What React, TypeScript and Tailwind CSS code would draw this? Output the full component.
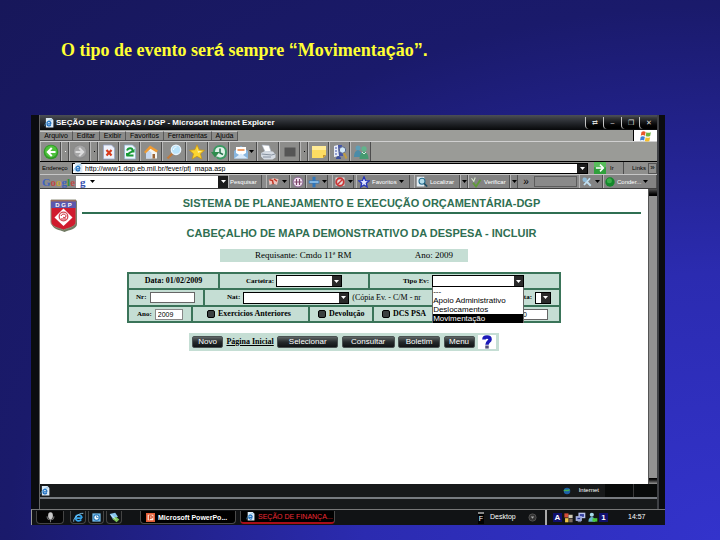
import React from "react";

type Kids = { children?: React.ReactNode };

function Svg({ children, className = "size-4" }: Kids & { className?: string }) {
  return (
    <svg viewBox="0 0 16 16" className={`shrink-0 ${className}`} aria-hidden="true">
      {children}
    </svg>
  );
}

function Caret({ className = "fill-black" }: { className?: string }) {
  return (
    <svg viewBox="0 0 5 3" className={`h-[3px] w-[5px] shrink-0 ${className}`} aria-hidden="true">
      <path d="M0 0h5L2.5 3z" />
    </svg>
  );
}

const BackIcon = () => (
  <Svg>
    <circle cx="8" cy="8" r="7.3" fill="#2f9a26" />
    <circle cx="8" cy="7.4" r="6" fill="#4fc13c" />
    <path d="M12.5 7H7.3l2.2-2.4L8 3.2 3.4 8 8 12.8l1.5-1.4L7.3 9h5.2z" fill="#fff" />
  </Svg>
);
const ForwardIcon = () => (
  <Svg>
    <circle cx="8" cy="8" r="7.2" fill="#8a8a8a" />
    <circle cx="8" cy="7.6" r="6" fill="#a5a5a5" />
    <path d="M3.5 7h5.2L6.5 4.6 8 3.2 12.6 8 8 12.8l-1.5-1.4L8.7 9H3.5z" fill="#dcdcdc" />
  </Svg>
);
const StopIcon = () => (
  <Svg>
    <path d="M2.5 1h8l3 3v11h-11z" fill="#eef2fb" stroke="#9aa8cc" strokeWidth=".8" />
    <path d="M5.5 6l5 5.500M10.500 6l-5 5.500" stroke="#d83a1c" strokeWidth="2.2" />
  </Svg>
);
const RefreshIcon = () => (
  <Svg>
    <path d="M2.5 1h8l3 3v11h-11z" fill="#eef7ff" stroke="#8fb0cc" strokeWidth=".8" />
    <path d="M5 6.500c1-3 5.500-3 5.500 0 0 2-5 2-5 5h6" fill="none" stroke="#189a35" strokeWidth="1.900" />
    <path d="M12.500 4.500v4H9zM4 12.500V9h3z" fill="#189a35" />
  </Svg>
);
const HomeIcon = () => (
  <Svg>
    <path d="M3 8l5.500-4.500L14 8v6.500H3z" fill="#f6f5f0" />
    <path d="M3 14.500V8l2.500-2 3 2.500v6z" fill="#c7d8ef" />
    <path d="M1 8L7 1.500l8 5-1.500 2-6-3.700L2.500 9.500z" fill="#ee9b34" />
    <path d="M9.500 10h2.500v4.500H9.500z" fill="#9a6234" />
  </Svg>
);
const SearchIcon = () => (
  <Svg>
    <path d="M6.500 9.500L1.500 14.500" stroke="#c07a3c" strokeWidth="2.300" />
    <circle cx="10" cy="5.800" r="4.700" fill="#b9e4fb" stroke="#eaf6ff" strokeWidth="1.300" />
    <path d="M7.500 6c0-2 1.500-3 3-3" stroke="#fff" fill="none" />
  </Svg>
);
const StarIcon = () => (
  <Svg>
    <path d="M8 .8l2.200 5 5.300.5-4 3.500 1.300 5.200L8 12.300 3.200 15l1.300-5.200-4-3.500 5.300-.5z" fill="#fbd530" stroke="#c9900f" strokeWidth=".7" />
    <path d="M8 3l1.200 4H13L9 9z" fill="#fff3a3" />
  </Svg>
);
const HistoryIcon = () => (
  <Svg>
    <path d="M3 8C3 0 15 0 15 8s-8 7-9 5" fill="#dff2e8" stroke="#3b9a63" strokeWidth="2" />
    <path d="M9 4.500V9l3 1.500" stroke="#26734d" strokeWidth="1.500" fill="none" />
    <path d="M0 8h8.500L4 13.500z" fill="#2f8b4d" />
  </Svg>
);
const MailIcon = () => (
  <Svg>
    <path d="M1 7l7-5 7 5v7.500H1z" fill="#88b6df" />
    <path d="M3 3h10v6l-5 3-5-3z" fill="#fff" />
    <path d="M4.500 5h7v2h-7z" fill="#f2a26b" />
    <path d="M1 14.500L8 9.500l7 5z" fill="#d7e9fa" />
  </Svg>
);
const PrintIcon = () => (
  <Svg>
    <path d="M2 1l7 .5 2 6H5z" fill="#fff" stroke="#a7b4c4" strokeWidth=".6" />
    <path d="M1 9l4-2 8 .5 2.500 3v3l-3 2H4l-3-3z" fill="#d5dbe3" />
    <path d="M1.500 10l10 1 3.500-1M3 13h8" stroke="#7e8997" strokeWidth=".9" fill="none" />
  </Svg>
);
const EditIcon = () => (
  <Svg>
    <path d="M2.500 3.500h11v9h-11z" fill="#555" />
  </Svg>
);
const NoteIcon = () => (
  <Svg>
    <path d="M1 2h14v9l-3 3H1z" fill="#fddc62" />
    <path d="M1 2h14v4H1z" fill="#ffeb96" />
    <path d="M15 11h-3v3z" fill="#c8952a" />
  </Svg>
);
const ResearchIcon = () => (
  <Svg>
    <path d="M2 2l4-1 1 11-5 1z" fill="#e7ecf8" />
    <path d="M6 1h4l1 11H7z" fill="#4556a8" />
    <path d="M3 4h2M3 7h2M3 10h2" stroke="#4556a8" />
    <circle cx="10.500" cy="6" r="3.200" fill="#d2e8f6" stroke="#59678c" />
    <path d="M12 9l2.500 5.500" stroke="#bf9b40" strokeWidth="2" />
    <path d="M4 15c0-4 5-4 5 0z" fill="#3c4f9c" />
  </Svg>
);
const PeopleIcon = () => (
  <Svg>
    <circle cx="5" cy="4" r="2.500" fill="#5f9fb8" />
    <path d="M1 13c0-9 8-9 8 0z" fill="#4b8ca8" />
    <circle cx="11" cy="5" r="2.700" fill="#62b58c" />
    <path d="M6.500 15c0-9.500 9-9.500 9 0z" fill="#469a70" />
    <path d="M9 8l2 2 2-2" stroke="#d7efe2" fill="none" />
  </Svg>
);
const IePageIcon = ({ className = "size-[11px]" }: { className?: string }) => (
  <Svg className={className}>
    <path d="M3 0h9l3 3v12H3z" fill="#dceaf6" />
    <path d="M11.500 9.500H4.800c0 3.500 4.500 4 6 1.500M4.800 8c.5-3.500 6-3.500 6.500 1" fill="none" stroke="#1f6fc0" strokeWidth="2" />
    <path d="M1 13C1 8 9 2 13 3" fill="none" stroke="#4fa5dd" />
  </Svg>
);
const IeIcon = () => (
  <Svg className="size-[11px]">
    <path d="M13 9H4c0 4.500 6 5 8 2M4 8c.5-5 8.500-5 9 1" fill="none" stroke="#35a2e8" strokeWidth="2.500" />
    <path d="M1 14C0 9 9 1 15 2" fill="none" stroke="#8fd0f5" strokeWidth="1.300" />
  </Svg>
);
const WindowsFlag = () => (
  <Svg className="size-3">
    <path d="M2 2.500c2-1 3.500-1 5.500 0L6.500 7.500c-2-1-3.500-1-5.500 0z" fill="#e8572a" />
    <path d="M8.500 3c2 1 4 1 6 0l-1 5c-2 1-4 1-6 0z" fill="#6db33f" />
    <path d="M1 9c2-1 3.500-1 5.500 0l-1 5c-2-1-3.500-1-5.500 0z" fill="#3f7fd4" />
    <path d="M7.500 9.500c2 1 4 1 6 0l-1 5c-2 1-4 1-6 0z" fill="#f5bd2a" />
  </Svg>
);
const GoIcon = () => (
  <Svg className="size-3">
    <path d="M0 0h16v16H0z" fill="#2fa03b" />
    <path d="M0 0h16v7H0z" fill="#58bd5c" />
    <path d="M2.500 8h9M8 3.500L12.500 8 8 12.500" stroke="#fff" strokeWidth="2" fill="none" />
  </Svg>
);

const tool = "flex h-[19px] items-center justify-center border-r border-r-[#4d4d4d] border-l border-l-[#b9b9b9] bg-[#8d8d8b]";

function Tool({ label, width, children }: Kids & { label: string; width: string }) {
  return (
    <button type="button" aria-label={label} className={`${tool} ${width}`}>
      {children}
    </button>
  );
}

function Toolbar() {
  return (
    <div className="flex h-5 items-center overflow-hidden border-t border-[#d0d0d0] bg-[#9a9b97]">
      <Tool label="Voltar" width="w-[21px]"><BackIcon /></Tool>
      <Tool label="Histórico anterior" width="w-2"><span className="size-px bg-white" /></Tool>
      <Tool label="Avançar" width="w-[21px]"><ForwardIcon /></Tool>
      <Tool label="Histórico seguinte" width="w-2"><span className="size-px bg-black" /></Tool>
      <Tool label="Parar" width="w-[21px]"><StopIcon /></Tool>
      <Tool label="Atualizar" width="w-[21px]"><RefreshIcon /></Tool>
      <Tool label="Página inicial" width="w-[22px]"><HomeIcon /></Tool>
      <Tool label="Pesquisar" width="w-6"><SearchIcon /></Tool>
      <Tool label="Favoritos" width="w-[22px]"><StarIcon /></Tool>
      <Tool label="Histórico" width="w-[21px]"><HistoryIcon /></Tool>
      <Tool label="Correio" width="w-7"><MailIcon /><Caret /></Tool>
      <Tool label="Imprimir" width="w-[22px]"><PrintIcon /></Tool>
      <Tool label="Editar" width="w-[21px]"><EditIcon /></Tool>
      <Tool label="Opções de edição" width="w-2"><span className="size-px bg-black" /></Tool>
      <Tool label="Discutir" width="w-[21px]"><NoteIcon /></Tool>
      <Tool label="Referência" width="w-[21px]"><ResearchIcon /></Tool>
      <Tool label="Messenger" width="w-[21px]"><PeopleIcon /></Tool>
    </div>
  );
}

function TitleBar() {
  return (
    <header className="flex h-[15px] items-center bg-linear-to-b from-[#4c4f56] via-[#26292e] to-[#08090b] pl-1">
      <IePageIcon className="size-[10px]" />
      <span className="ml-[2px] flex-1 overflow-hidden text-[8px] leading-3 font-bold whitespace-nowrap text-white">
        SEÇÃO DE FINANÇAS / DGP - Microsoft Internet Explorer
      </span>
      {[
        ["Fixar", "⇄"],
        ["Minimizar", "–"],
        ["Restaurar", "❐"],
        ["Fechar", "✕"],
      ].map(([name, glyph]) => (
        <button
          key={name}
          type="button"
          aria-label={name}
          className="flex h-3 w-[18px] items-center justify-center rounded-bl border-l border-l-[#c4c4c4] bg-linear-to-b from-[#3d3f42] to-black text-[7px] leading-none text-[#dcdcdc]"
        >
          {glyph}
        </button>
      ))}
    </header>
  );
}

function MenuBar() {
  const item = "h-[10px] border-r border-b border-[#575757] border-t border-t-[#c8c8c8] bg-[#8b8b89] text-center text-[7px] leading-[8px] text-black";
  return (
    <nav className="flex h-[11px] items-center bg-[#9c9d99]">
      <button type="button" className={`${item} w-[33px]`}>Arquivo</button>
      <button type="button" className={`${item} w-[27px]`}>Editar</button>
      <button type="button" className={`${item} w-[26px]`}>Exibir</button>
      <button type="button" className={`${item} w-[38px]`}>Favoritos</button>
      <button type="button" className={`${item} w-12`}>Ferramentas</button>
      <button type="button" className={`${item} w-[26px]`}>Ajuda</button>
      <span className="ml-auto flex h-[11px] w-6 items-center justify-center border-l border-black bg-white">
        <WindowsFlag />
      </span>
    </nav>
  );
}

function AddressBar() {
  return (
    <div className="flex h-[13px] items-center border-t border-black bg-[#8f8f8d] text-[6px]">
      <label htmlFor="address" className="w-8 pl-[2px]">Endereço</label>
      <div className="flex h-[11px] flex-1 items-center border border-black bg-white">
        <IePageIcon className="size-[10px]" />
        <input
          id="address"
          defaultValue="http://www1.dgp.eb.mil.br/fever/pfj_mapa.asp"
          className="h-2 min-w-0 flex-1 pl-[2px] text-[7px] leading-none text-black outline-none"
        />
        <button type="button" aria-label="Endereços recentes" className="flex h-[9px] w-[10px] items-center justify-center bg-[#1b1b1b]">
          <Caret className="fill-white" />
        </button>
      </div>
      <button type="button" className="ml-[6px] flex h-3 w-[30px] items-center gap-1 border-r border-[#4d4d4d]">
        <GoIcon />
        Ir
      </button>
      <button type="button" className="w-[22px] text-right">Links</button>
      <button type="button" aria-label="Mais links" className="ml-[2px] flex h-[11px] w-[9px] items-center justify-center border border-[#555] text-[8px] leading-none">»</button>
    </div>
  );
}

function GoogleBar() {
  const b = "flex h-[13px] shrink-0 items-center gap-[2px] border-r border-r-[#505050] border-l border-l-[#b5b5b5] bg-[#838383] px-px text-[6px] leading-none whitespace-nowrap text-white";
  return (
    <div className="flex h-[15px] items-center overflow-hidden border-y border-t-[#c6c6c6] border-b-[#3f3f3f] bg-[#8b8b8b]">
      <span className="w-9 shrink-0 pl-[2px] font-['Liberation_Serif',serif] text-[11px] leading-3 font-bold">
        <span className="text-[#3f62bd]">G</span>
        <span className="text-[#bd4b45]">o</span>
        <span className="text-[#c7a53c]">o</span>
        <span className="text-[#3f62bd]">g</span>
        <span className="text-[#2f8f3c]">l</span>
        <span className="text-[#bd4b45]">e</span>
      </span>
      <div className="flex h-3 w-[152px] shrink-0 items-center bg-white">
        <span className="pr-1 pl-1 font-['Liberation_Serif',serif] text-[11px] leading-[10px] font-bold text-[#3550b0]">g</span>
        <Caret />
        <input aria-label="Pesquisa Google" className="h-3 min-w-0 flex-1 outline-none" />
        <button type="button" aria-label="Pesquisas recentes" className="flex h-3 w-[10px] items-center justify-center bg-[#1b1b1b]">
          <Caret className="fill-white" />
        </button>
      </div>
      <button type="button" className={`${b} w-[34px]`}>Pesquisar</button>
      <button type="button" aria-label="Notícias" className={`${b} ml-1 w-6`}>
        <Svg className="size-3"><path d="M1 5l6-2 7 1-2 8-5-2-5 2z" fill="#edc2bb" /><path d="M2 5l4 1 1 5M8 4l4 3" stroke="#c23827" strokeWidth="2" fill="none" /></Svg>
        <Caret />
      </button>
      <button type="button" aria-label="PageRank" className={`${b} w-4`}>
        <Svg className="size-3"><circle cx="8" cy="8" r="6.500" fill="#f3e4f2" stroke="#7a4b86" /><path d="M3 8h10M6 4v8M10 4v8" stroke="#7d4468" strokeWidth="1.500" /></Svg>
      </button>
      <button type="button" aria-label="Adicionar" className={`${b} w-[22px]`}>
        <Svg className="size-3"><path d="M6 1h4v5h5v4h-5v5H6v-5H1V6h5z" fill="#2f76bb" /><path d="M2 7h12v2H2z" fill="#9fcdf0" /></Svg>
        <Caret />
      </button>
      <button type="button" aria-label="Pop-ups" className={`${b} ml-1 w-[22px]`}>
        <Svg className="size-3"><path d="M2 2h12v11H2z" fill="#e8dede" /><circle cx="8" cy="8" r="5" fill="none" stroke="#c93636" strokeWidth="2.500" /><path d="M5 11l6-6" stroke="#c93636" strokeWidth="2" /></Svg>
        <Caret />
      </button>
      <button type="button" className={`${b} ml-[2px] w-[54px]`}>
        <Svg className="size-3"><path d="M8 1l2 5 5 .4-4 3.300 1.300 5L8 12l-4.300 2.700 1.300-5-4-3.300L6 6z" fill="#dfe4ff" stroke="#2232b8" strokeWidth="1.600" /></Svg>
        Favoritos
        <Caret />
      </button>
      <button type="button" className={`${b} ml-1 w-[46px]`}>
        <Svg className="size-3"><path d="M1 1h10v13H1z" fill="#e3edf3" /><circle cx="8" cy="7" r="4" fill="#b4dcea" stroke="#286e8f" strokeWidth="1.500" /><path d="M11 10l4 4" stroke="#17475e" strokeWidth="2" /></Svg>
        Localizar
      </button>
      <button type="button" aria-label="Opções de localizar" className={`${b} w-2`}><Caret /></button>
      <button type="button" className={`${b} w-[42px]`}>
        <Svg className="size-3"><path d="M2 3l3 4 2-5" stroke="#d6e4cb" fill="none" strokeWidth="1.500" /><path d="M4 9l4 5 6-9" stroke="#5f9a38" fill="none" strokeWidth="2.500" /></Svg>
        Verificar
      </button>
      <button type="button" aria-label="Opções de verificar" className={`${b} w-2`}><Caret /></button>
      <span className="w-4 shrink-0 text-center text-[10px] leading-none">»</span>
      <span className="h-[11px] min-w-0 flex-1 border border-[#5c5c5c] bg-[#8a8a8a]" />
      <button type="button" aria-label="Configurações" className={`${b} ml-[2px] w-6`}>
        <Svg className="size-3"><path d="M3 3l10 10M12 3l-8 9" stroke="#c1dff0" strokeWidth="2.500" /><circle cx="5" cy="5" r="3" fill="#8cbad8" /></Svg>
        <Caret />
      </button>
      <button type="button" className={`${b} w-[54px]`}>
        <Svg className="size-[10px]"><circle cx="8" cy="8" r="7.500" fill="#14882c" /><circle cx="7" cy="6" r="4" fill="#3cae4a" /></Svg>
        Conder...
        <Caret />
      </button>
    </div>
  );
}

function Crest() {
  return (
    <svg viewBox="0 0 28 33" className="mt-[2px] h-[33px] w-7 shrink-0" role="img" aria-label="Brasão DGP">
      <path d="M2 2h25v23c0 5-8 6-12.500 8C10 31 2 30 2 25z" fill="#6f7a62" />
      <path d="M1 1h25v22c0 5-8 6-12.500 8C9 29 1 28 1 23z" fill="#d01c2e" stroke="#8c8c78" />
      <path d="M1 1h25v8H1z" fill="#5d58ad" />
      <path d="M1 1h25v1.500H1z" fill="#9c6b59" />
      <text x="13.500" y="7.500" textAnchor="middle" className="fill-white font-['Liberation_Sans',sans-serif] text-[6px] font-bold">D G P</text>
      <path d="M13.500 9.500l9 9-9 8.500-9-8.500z" fill="#fff" />
      <circle cx="13.500" cy="17.500" r="4.300" fill="#fff" stroke="#d44a55" strokeWidth="1.300" />
      <path d="M11 17c1-3 5-2 5 0s-2 2-3 1M11 20h5" fill="none" stroke="#c9202f" />
    </svg>
  );
}

function Combo({ id, width }: { id: string; width: string }) {
  return (
    <span className={`flex h-3 items-center border border-black bg-white ${width}`}>
      <select id={id} className="h-[10px] min-w-0 flex-1 appearance-none bg-white text-[8px] leading-none outline-none">
        <option></option>
      </select>
      <span className="flex h-[10px] w-[9px] shrink-0 items-center justify-center bg-[#2a2a2a]">
        <Caret className="fill-white" />
      </span>
    </span>
  );
}

const cell = "flex h-full items-center border-r-2 border-[#3a7459]";
const field = "font-['Liberation_Serif',serif] leading-none font-bold text-black whitespace-nowrap";

function Check({ id, label }: { id: string; label: string }) {
  return (
    <>
      <input id={id} type="checkbox" className="size-2 appearance-none rounded-xs border border-black bg-[#3b4040]" />
      <label htmlFor={id} className={`${field} pl-[3px] text-[8px]`}>{label}</label>
    </>
  );
}

function EventForm() {
  return (
    <form className="mx-auto mt-[10px] w-[434px] max-w-full border-2 border-r-0 border-[#3a7459] bg-[#c5ded4]">
      <div className="flex h-[15px] border-b border-[#3a7459]">
        <div className={`${cell} w-[91px] justify-center`}>
          <span className={`${field} text-[8px]`}>Data: 01/02/2009</span>
        </div>
        <div className={`${cell} w-[150px] gap-[2px] pl-[26px]`}>
          <label htmlFor="cart" className={`${field} text-[7px]`}>Carteira:</label>
          <Combo id="cart" width="w-[66px]" />
        </div>
        <div className={`${cell} flex-1 gap-[3px] pl-[33px]`}>
          <label htmlFor="tipo" className={`${field} text-[7px]`}>Tipo Ev:</label>
          <span className="relative">
            <Combo id="tipo" width="w-[92px]" />
            <ul className="absolute top-3 left-0 z-10 w-[92px] border-x border-[#666] bg-white text-[8px] leading-none">
              <li className="h-[9px] leading-[9px]">---</li>
              <li className="h-[9px] leading-[9px] whitespace-nowrap">Apoio Administrativo</li>
              <li className="h-[9px] leading-[9px]">Deslocamentos</li>
              <li className="h-[9px] bg-black leading-[9px] text-white">Movimentação</li>
            </ul>
          </span>
        </div>
      </div>
      <div className="flex h-[17px] border-y border-[#3a7459]">
        <div className={`${cell} w-[76px] gap-[3px] pl-[7px]`}>
          <label htmlFor="nr" className={`${field} text-[7px]`}>Nr:</label>
          <input id="nr" className="h-[11px] w-[45px] border border-[#666] bg-white text-[8px]" />
        </div>
        <div className={`${cell} flex-1 pl-[22px]`}>
          <label htmlFor="nat" className={`${field} pr-[3px] text-[7px]`}>Nat:</label>
          <Combo id="nat" width="w-[106px]" />
          <span className="pl-[3px] font-['Liberation_Serif',serif] text-[8px] whitespace-nowrap">(Cópia Ev. - C/M - nr</span>
          <label htmlFor="nota" className={`${field} ml-auto pr-[3px] text-[7px]`}>Nota:</label>
          <Combo id="nota" width="w-4" />
          <span className="w-2" />
        </div>
      </div>
      <div className="flex h-[15px] border-t border-[#3a7459]">
        <div className={`${cell} w-[64px] gap-[3px] pl-2`}>
          <label htmlFor="ano" className={`${field} text-[7px]`}>Ano:</label>
          <input id="ano" defaultValue="2009" className="h-[11px] w-7 border border-[#888] bg-white pl-[2px] text-[7px] leading-none" />
        </div>
        <div className={`${cell} w-[117px] pl-[14px]`}><Check id="exerc" label="Exercicios Anteriores" /></div>
        <div className={`${cell} w-[64px] pl-2`}><Check id="dev" label="Devolução" /></div>
        <div className={`${cell} flex-1 pl-2`}>
          <Check id="dcs" label="DCS PSA" />
          <input aria-label="Valor" defaultValue="0" className="mr-[11px] ml-auto h-[11px] w-[30px] border border-[#666] bg-white pl-1 text-[7px] leading-none" />
        </div>
      </div>
    </form>
  );
}

const action = "h-3 rounded-xs border border-[#4a5252] bg-linear-to-b from-[#5f6666] via-[#252a2c] to-[#101315] text-[8px] leading-none text-white";

function WebPage() {
  return (
    <main className="flex min-h-[295px] bg-white">
      <div className="flex-1">
        <div className="flex items-start pt-2 pl-[10px]">
          <Crest />
          <div className="flex-1 pl-1 text-center text-[11px] leading-4 font-bold text-[#2f6f52]">
            <div className="mr-[7px]">
              <h1 className="border-b-2 border-[#2f6f52] pb-[2px] leading-[13px]">
                SISTEMA DE PLANEJAMENTO E EXECUÇÃO ORÇAMENTÁRIA-DGP
              </h1>
              <h2 className="pt-[11px] whitespace-nowrap">CABEÇALHO DE MAPA DEMONSTRATIVO DA DESPESA - INCLUIR</h2>
            </div>
          </div>
        </div>
        <div className="mx-auto mt-2 flex h-[13px] w-[248px] items-center justify-between bg-[#c5ded4] pr-[15px] pl-[35px] font-['Liberation_Serif',serif] text-[9px] leading-none">
          <span>Requisante: Cmdo 11ª RM</span>
          <span>Ano: 2009</span>
        </div>
        <EventForm />
        <div className="mx-auto mt-[10px] flex h-[18px] w-[310px] items-center justify-between bg-[#c5ded4] px-[3px]">
          <button type="button" className={`${action} w-[31px]`}>Novo</button>
          <a href="#inicio" className="font-['Liberation_Serif',serif] text-[8px] font-bold underline">Página Inicial</a>
          <button type="button" className={`${action} w-[61px]`}>Selecionar</button>
          <button type="button" className={`${action} w-[53px]`}>Consultar</button>
          <button type="button" className={`${action} w-[42px]`}>Boletim</button>
          <button type="button" className={`${action} w-[31px]`}>Menu</button>
          <button type="button" aria-label="Ajuda" className="flex h-[14px] w-[18px] items-center justify-center bg-white">
            <Svg className="size-[14px]"><path d="M4.500 5c0-3.500 7-3.500 7 0 0 2.500-3.500 2.500-3.500 6" fill="none" stroke="#1b1bb8" strokeWidth="4" /><path d="M6 12h4v3.500H6z" fill="#50507a" /></Svg>
          </button>
        </div>
      </div>
      <div className="flex w-[9px] flex-col justify-between border-l border-[#555] bg-[#929292]">
        <span className="h-[7px] bg-linear-to-b from-[#555] to-black" />
        <span className="h-[6px] bg-linear-to-b from-black to-[#999]" />
      </div>
    </main>
  );
}

function StatusBar() {
  return (
    <footer className="bg-[#17191a]">
      <div className="flex h-[13px] items-center text-[6px] text-white">
        <IePageIcon className="size-[10px]" />
        <span className="ml-auto flex items-center gap-2 pr-[6px]">
          <Svg className="size-2"><circle cx="8" cy="8" r="6.500" fill="#1c5fa8" /><path d="M2 8c4-5 5 3 11-3" stroke="#45b05a" strokeWidth="3" fill="none" /></Svg>
          Internet
        </span>
        <span className="h-[13px] w-7 bg-[#080a0a]" />
        <span className="h-[13px] w-6 border-l border-[#3a3a3a] bg-[#080a0a]" />
      </div>
      <div className="h-[12px] border-t-2 border-[#777b80]" />
    </footer>
  );
}

function Taskbar() {
  const task = "flex h-[13px] items-center gap-[3px] overflow-hidden rounded-b border border-t-0 border-[#4a4a4a] bg-black px-[5px] text-[7px] leading-none whitespace-nowrap";
  const quick = "flex h-[13px] w-4 items-center justify-center rounded-b border border-t-0 border-[#444]";
  return (
    <div className="flex h-4 items-center border-t border-[#777] border-l border-l-[#999] bg-[#111315] text-white">
      <button type="button" aria-label="Iniciar" className="ml-1 flex h-[13px] w-7 items-center justify-center rounded-b border border-t-0 border-[#444] bg-[#060606]">
        <Svg className="size-[11px]"><path d="M3 6c0 7 10 7 10 0M8 10v5" stroke="#777" strokeWidth="1.500" fill="none" /><ellipse cx="8" cy="5.500" rx="3.500" ry="5" fill="#c9c9c9" /></Svg>
      </button>
      <div className="ml-[6px] flex gap-[2px]">
        <button type="button" aria-label="Internet Explorer" className={quick}><IeIcon /></button>
        <button type="button" aria-label="Outlook" className={quick}>
          <Svg className="size-[11px]"><path d="M2 2h12v12H2z" fill="#73bbea" /><circle cx="8" cy="8" r="4" fill="#f3faff" stroke="#1f6fb0" strokeWidth="1.500" /><path d="M8 5v3h3" stroke="#1f6fb0" fill="none" /></Svg>
        </button>
        <button type="button" aria-label="Mostrar área de trabalho" className={quick}>
          <Svg className="size-[11px]"><path d="M1 3l8-2 4 6-7 4z" fill="#88c7ef" /><path d="M5 10l5-3 5 4-4 4z" fill="#7cc55a" /><path d="M3 4l7 7" stroke="#fff" /></Svg>
        </button>
      </div>
      <button type="button" className={`${task} ml-[18px] w-[96px] font-bold`}>
        <Svg className="size-[9px]"><path d="M0 0h16v16H0z" fill="#e35c36" /><path d="M3 3h10v10H3z" fill="#fff1e8" /><path d="M6 12V5h3c3 0 3 4 0 4H6" stroke="#ce421c" strokeWidth="2" fill="none" /></Svg>
        Microsoft PowerPo...
      </button>
      <button type="button" className={`${task} ml-1 w-[95px] border-b-2 border-b-[#a90f18] text-[#ee2a34]`}>
        <IePageIcon className="size-[9px]" />
        SEÇÃO DE FINANÇA...
      </button>
      <span className="ml-auto h-3 border-t-2 border-[#888] bg-black px-px text-[7px] leading-[10px]">F</span>
      <span className="w-11 pl-[6px] text-[7px]">Desktop</span>
      <Svg className="mr-2 size-[9px]"><circle cx="8" cy="8" r="6.500" fill="#333" stroke="#686868" /><path d="M5 6h6l-3 4z" fill="#aaa" /></Svg>
      <div className="flex h-[15px] items-center gap-px border-l-2 border-[#aaa] pl-[6px]">
        <span className="w-[9px] bg-[#10106e] text-center text-[8px] leading-[9px] font-bold">A</span>
        <Svg className="size-[11px]"><path d="M2 2h6v6H2z" fill="#d94e38" /><path d="M8 4h6v5H8z" fill="#cfc9b4" /><path d="M3 9h5v6H3z" fill="#edc245" /><path d="M9 10h5v5H9z" fill="#7b6b60" /></Svg>
        <Svg className="size-[11px]"><path d="M5 1h10v8H5z" fill="#b9c3ec" /><path d="M7 3h6v4H7z" fill="#3541a0" /><path d="M1 6h9v7H1z" fill="#a5b1e0" /><path d="M3 8h5v3H3zM4 14h5" fill="#27338c" stroke="#a5b1e0" /></Svg>
        <Svg className="size-[11px]"><circle cx="7" cy="4" r="3" fill="#a7dcec" /><path d="M2 14c0-9 10-9 10 0z" fill="#67b6cf" /><path d="M8 9h7v5H8z" fill="#49c637" /></Svg>
        <span className="w-[9px] bg-[#10106e] text-center text-[8px] leading-[9px] font-bold">1</span>
      </div>
      <time className="w-[57px] pl-5 text-[7px]">14:57</time>
    </div>
  );
}

export default function App() {
  return (
    <div className="min-h-screen bg-[radial-gradient(farthest-corner_at_100%_100%,#3333cc_0%,#2b2bb0_35%,#1a1a6b_70%,#17175a_100%)] pt-[38px] pr-[55px] pb-4 pl-[31px] font-['Liberation_Sans',Arial,sans-serif]">
      <p className="pl-[30px] font-['Liberation_Serif',serif] text-[18px] leading-6 font-bold whitespace-nowrap text-[#ffff33]">
        O tipo de evento ser<span className="font-['Liberation_Sans',sans-serif]">á</span> sempre{" "}
        <span className="font-['Liberation_Sans',sans-serif]">“</span>Movimenta
        <span className="font-['Liberation_Sans',sans-serif]">ç</span>ão
        <span className="font-['Liberation_Sans',sans-serif]">”.</span>
      </p>
      <div className="mt-[53px]">
        <section className="border-r-[6px] border-l-8 border-[#0b0c10]">
          <div className="border-r-2 border-l border-r-[#3f4145] border-l-[#666]">
            <TitleBar />
            <MenuBar />
            <Toolbar />
            <AddressBar />
            <GoogleBar />
            <WebPage />
            <StatusBar />
          </div>
        </section>
        <Taskbar />
      </div>
    </div>
  );
}
